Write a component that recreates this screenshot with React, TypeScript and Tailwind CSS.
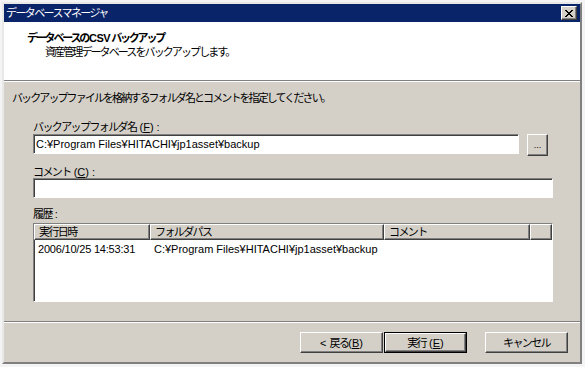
import React from "react";

const font = "font-['Liberation_Sans','Noto_Sans_CJK_JP',sans-serif]";
const jp = "tracking-[-1.6px]";
const sunken =
  "border border-t-[#808080] border-l-[#808080] border-r-white border-b-white shadow-[inset_1px_1px_#404040]";
const raised =
  "border border-t-white border-l-white border-r-[#404040] border-b-[#404040] shadow-[inset_-1px_-1px_#808080]";

function Button({ children, isDefault }: { children: React.ReactNode; isDefault?: boolean }): JSX.Element {
  if (isDefault) {
    return (
      <div className="w-[83px] h-[21px] border border-black">
        <div className={`w-full h-full bg-[#d4d0c8] flex items-center justify-center ${raised}`}>{children}</div>
      </div>
    );
  }
  return (
    <div className={`w-[83px] h-[21px] bg-[#d4d0c8] flex items-center justify-center ${raised}`}>{children}</div>
  );
}

function HeaderCell({ w, children }: { w: string; children?: React.ReactNode }): JSX.Element {
  return (
    <div className={`${w} h-full bg-[#d4d0c8] pl-[4px] flex items-center ${raised} ${jp}`}>{children}</div>
  );
}

// mnemonic like "(F) :"
function Key({ k, colon }: { k: string; colon?: boolean }): JSX.Element {
  return (
    <span className="tracking-normal">
      &nbsp;(<u>{k}</u>){colon ? " :" : ""}
    </span>
  );
}

export default function App(): JSX.Element {
  return (
    <div className={`w-[585px] h-[367px] bg-[#f4f4f4] p-[2px] text-[11px] text-black leading-[12px] ${font}`}>
      <div className="w-[580px] h-[362px] bg-[#d4d0c8] border-2 border-t-[#e8e8e8] border-l-[#e8e8e8] border-r-[#808080] border-b-[#808080] flex flex-col">
        {/* Title bar */}
        <div className="h-[18px] bg-[#0a246a] flex items-center justify-between pl-[2px] pr-[3px]">
          <span className={`text-white ${jp}`}>データベースマネージャ</span>
          <div className={`w-[16px] h-[14px] bg-[#d4d0c8] flex items-center justify-center ${raised}`}>
            <svg width="8" height="7" viewBox="0 0 8 7">
              <path d="M0 0 L7 7 M1 0 L8 7 M7 0 L0 7 M8 0 L1 7" stroke="#000" strokeWidth="1" />
            </svg>
          </div>
        </div>

        {/* Header */}
        <div className="h-[58px] bg-white pt-[9px] pl-[23px]">
          <div className="font-bold leading-[14px] tracking-[-2.2px]">
            データベースの<span className="tracking-[-0.5px] mx-[1px]">CSV</span>バックアップ
          </div>
          <div className="pl-[18px] leading-[14px] tracking-[-1.9px]">資産管理データベースをバックアップします。</div>
        </div>
        <div className="h-[2px] border-t border-t-[#808080] border-b border-b-white" />

        {/* Body */}
        <div className="flex flex-col pl-[8px]">
          <div className="mt-[9px] leading-[14px] tracking-[-1.9px]">
            バックアップファイルを格納するフォルダ名とコメントを指定してください。
          </div>
          <div className="pl-[21px] pr-[27px] flex flex-col">
            <div className={`mt-[16px] ${jp}`}>
              バックアップフォルダ名
              <Key k="F" colon />
            </div>
            <div className="mt-[1px] h-[22px] flex items-start gap-[8px]">
              <div className={`w-[486px] h-[20px] bg-white flex items-center pl-[2px] ${sunken}`}>
                C:¥Program Files¥HITACHI¥jp1asset¥backup
              </div>
              <div className={`w-[21px] h-[22px] bg-[#d4d0c8] flex items-center justify-center text-[9px] ${raised}`}>
                ...
              </div>
            </div>
            <div className={`mt-[10px] ${jp}`}>
              コメント
              <Key k="C" colon />
            </div>
            <div className={`h-[20px] bg-white ${sunken}`} />
            <div className={`mt-[10px] ${jp}`}>
              履歴<span className="tracking-normal"> :</span>
            </div>
            <div className={`mt-[3px] h-[79px] bg-white flex flex-col ${sunken}`}>
              <div className="h-[16px] flex">
                <HeaderCell w="w-[116px]">実行日時</HeaderCell>
                <HeaderCell w="w-[234px]">フォルダパス</HeaderCell>
                <HeaderCell w="w-[146px]">コメント</HeaderCell>
                <HeaderCell w="flex-1" />
              </div>
              <div className="flex leading-[14px] mt-[2px]">
                <div className="w-[116px] pl-[4px] whitespace-nowrap tracking-[-0.2px]">2006/10/25 14:53:31</div>
                <div className="w-[234px] pl-[4px] whitespace-nowrap">C:¥Program Files¥HITACHI¥jp1asset¥backup</div>
              </div>
            </div>
          </div>
        </div>

        <div className="flex-1" />

        {/* Footer */}
        <div className="h-[2px] border-t border-t-[#808080] border-b border-b-white" />
        <div className="flex justify-end items-start pt-[9px] pb-[9px] pr-[12px]">
          <div className={`flex gap-[1px] mr-[18px] ${jp}`}>
            <Button>
              <span className="tracking-normal">&lt;&nbsp;</span>戻る
              <span className="tracking-normal">
                (<u>B</u>)
              </span>
            </Button>
            <Button isDefault>
              実行
              <Key k="E" />
            </Button>
          </div>
          <div className={jp}>
            <Button>キャンセル</Button>
          </div>
        </div>
      </div>
    </div>
  );
}
